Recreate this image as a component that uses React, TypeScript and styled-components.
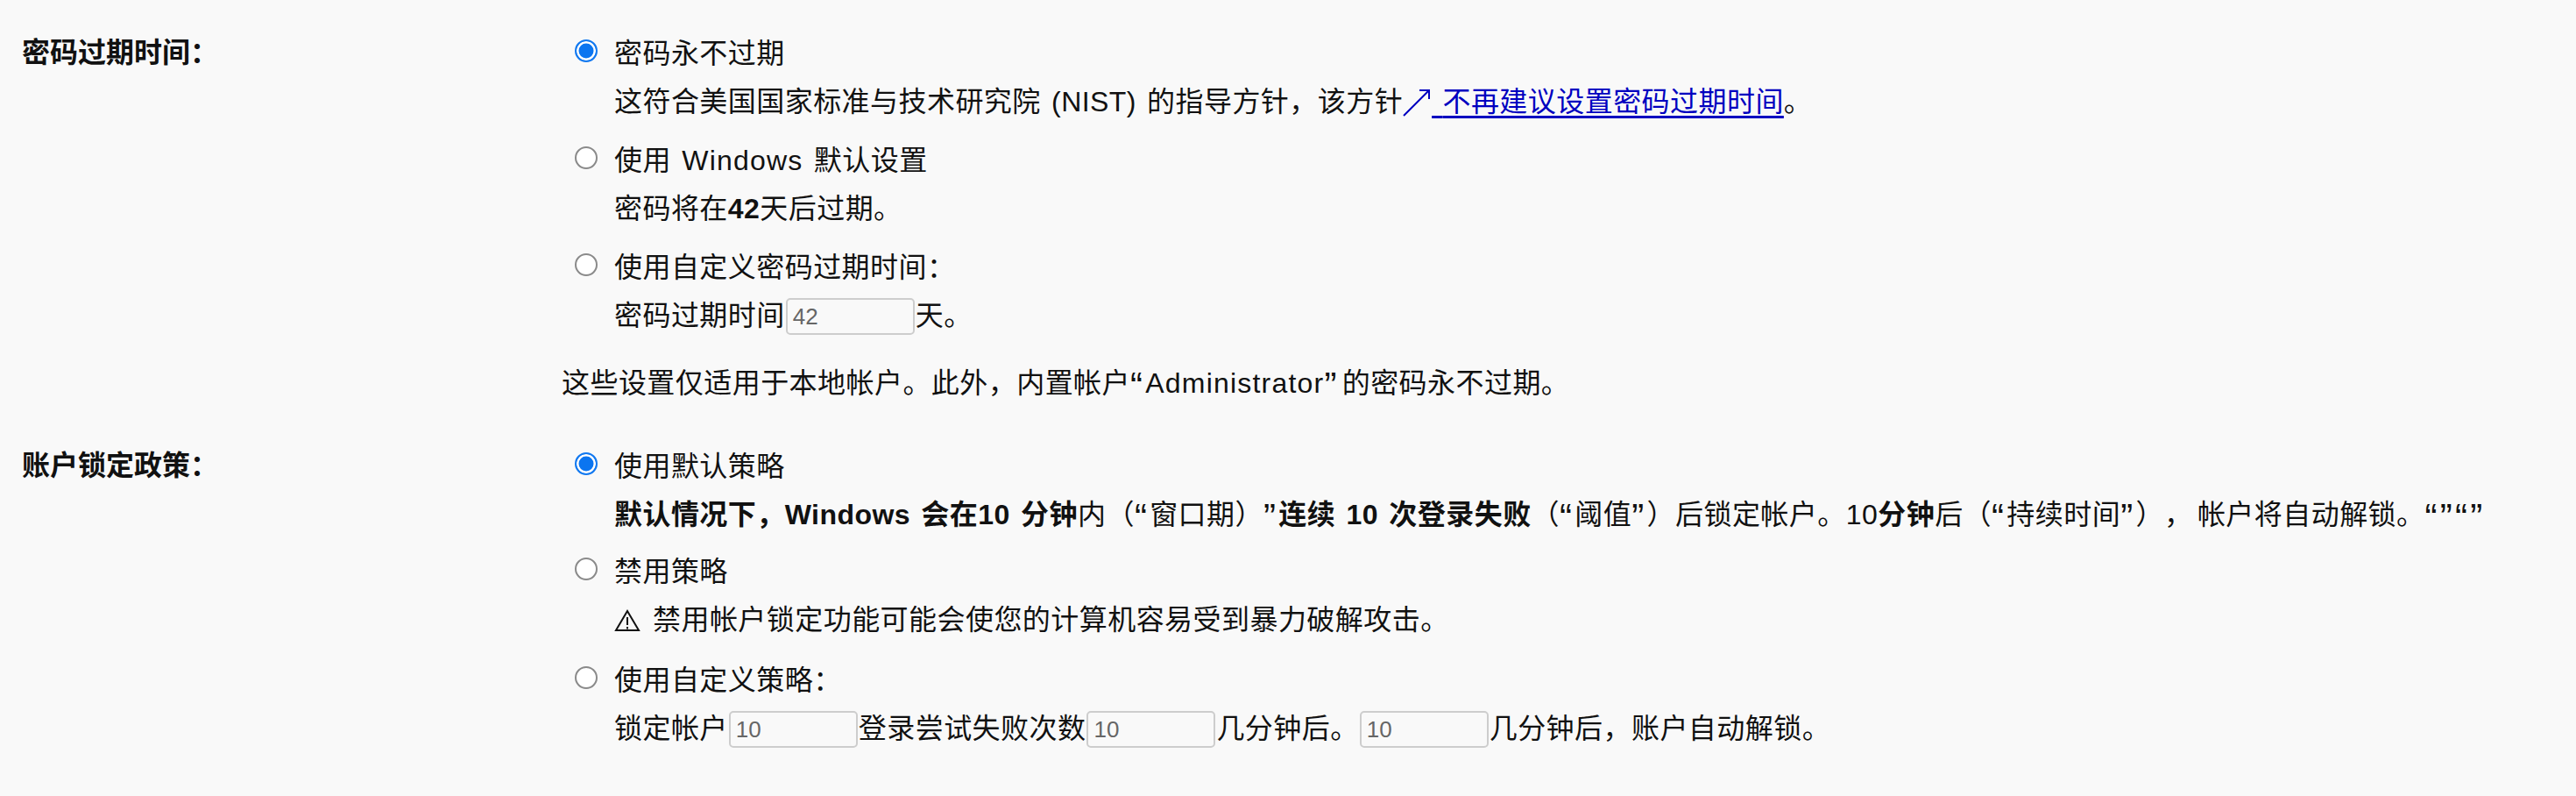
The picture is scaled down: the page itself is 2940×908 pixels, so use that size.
import React from "react";
import styled, { createGlobalStyle } from "styled-components";

const Global = createGlobalStyle`
  html, body { margin: 0; padding: 0; background: #f9f9f9; }
  body { font-family: "Liberation Sans", "Noto Sans CJK SC", sans-serif; font-size: 32px; color: #111; }
`;

const Page = styled.div`
  width: 2940px; height: 908px; overflow: hidden; box-sizing: border-box; padding: 29px 0 0 25px; background: #f9f9f9;
`;
const Section = styled.section`
  display: grid; grid-template-columns: 616px 1fr;
`;
const Label = styled.div`font-weight: 700; line-height: 57px; padding-top: 3px;`;
const Body = styled.div`
  display: flex; flex-direction: column; letter-spacing: 0.45px; word-spacing: 3px; white-space: pre;
  text-spacing-trim: space-all;
`;
const Choice = styled.div<{ $mb?: number }>`display: flex; flex-direction: column; margin-bottom: ${(p) => p.$mb ?? 8}px;`;
const RadioRow = styled.label`display: flex; align-items: center; height: 57px; padding-left: 15px;`;
const Radio = styled.span<{ $on?: boolean }>`
  width: 26px; height: 26px; box-sizing: border-box; border-radius: 50%; flex: none; margin-right: 19px;
  border: ${(p) => (p.$on ? "2.5px solid #1279f0" : "2.5px solid #8a8a8a")};
  background: ${(p) => (p.$on ? "#0b75f0" : "#fff")};
  box-shadow: ${(p) => (p.$on ? "inset 0 0 0 2.5px #fff" : "none")};
`;
const Desc = styled.div`height: 57px; line-height: 61px; padding-left: 60px;`;
const Note = styled.div`line-height: 62px; height: 60px; margin: 11px 0 34px;`;
const NumberBox = styled.span`
  display: inline-block; box-sizing: border-box; width: 147px; height: 42px; line-height: 38px; margin: -4px 1px 0; padding-left: 6px;
  vertical-align: middle; letter-spacing: 0;
  border: 2px solid #cdcdcd; border-radius: 5px; background: #f9f9f9; color: #666; font-size: 26px;
`;
const Link = styled.a`color: #0000c0; text-decoration: underline; text-decoration-thickness: 3px; text-underline-offset: 5px;`;
const Bold = styled.b`font-weight: 700;`;
const Latin = styled.span<{ $ls?: number }>`letter-spacing: ${(p) => p.$ls ?? 1.2}px;`;
const Quote = styled.span<{ $pad?: number }>`
  font-size: 42px; line-height: 0; vertical-align: -6px; letter-spacing: 3.3px; margin-right: ${(p) => p.$pad ?? 0}px;
`;
const Comma = styled.span`letter-spacing: 6px;`;
const Arrow = styled.svg`width: 33px; height: 32px; vertical-align: -6px;`;
const Warning = styled.svg`width: 30px; height: 26px; vertical-align: -3px; margin-right: 14px;`;

const App: React.FC = () => (
  <Page>
    <Global />
    <Section>
      <Label>密码过期时间：</Label>
      <Body>
        <Choice>
          <RadioRow><Radio $on /><span>密码永不过期</span></RadioRow>
          <Desc>这符合美国国家标准与技术研究院 <Latin $ls={0.4}>(NIST)</Latin> 的指导方针，该方针<Link href="#"><Arrow viewBox="0 0 33 32" fill="none" stroke="#0000c0" strokeWidth="2"><path d="M1 31 L30 2 M19 2 H30 V12" /></Arrow>{" "}不再建议设置密码过期时间</Link>。</Desc>
        </Choice>
        <Choice>
          <RadioRow><Radio /><span>使用 <Latin>Windows</Latin> 默认设置</span></RadioRow>
          <Desc>密码将在<Bold>42</Bold>天后过期。</Desc>
        </Choice>
        <Choice>
          <RadioRow><Radio /><span>使用自定义密码过期时间：</span></RadioRow>
          <Desc>密码过期时间<NumberBox>42</NumberBox>天。</Desc>
        </Choice>
        <Note>这些设置仅适用于本地帐户。此外，内置帐户<Quote>“</Quote><Latin>Administrator</Latin><Quote $pad={3}>”</Quote>的密码永不过期。</Note>
      </Body>
    </Section>
    <Section>
      <Label>账户锁定政策：</Label>
      <Body>
        <Choice $mb={6}>
          <RadioRow><Radio $on /><span>使用默认策略</span></RadioRow>
          <Desc><Bold>默认情况下，Windows 会在10 分钟</Bold>内（<Quote>“</Quote>窗口期）<Quote>”</Quote><Bold>连续 10 次登录失败</Bold>（<Quote>“</Quote>阈值<Quote>”</Quote>）后锁定帐户。10<Bold>分钟</Bold>后（<Quote>“</Quote>持续时间<Quote>”</Quote>）<Comma>，</Comma>帐户将自动解锁。<Quote>“”“”</Quote></Desc>
        </Choice>
        <Choice $mb={10}>
          <RadioRow><Radio /><span>禁用策略</span></RadioRow>
          <Desc><Warning viewBox="0 0 30 26" fill="none" stroke="#111" strokeWidth="2"><path d="M15 2 L28 24 H2 Z" /><path d="M15 9 V18 M15 20 V22.5" /></Warning>禁用帐户锁定功能可能会使您的计算机容易受到暴力破解攻击。</Desc>
        </Choice>
        <Choice>
          <RadioRow><Radio /><span>使用自定义策略：</span></RadioRow>
          <Desc>锁定帐户<NumberBox>10</NumberBox>登录尝试失败次数<NumberBox>10</NumberBox>几分钟后。<NumberBox>10</NumberBox>几分钟后，账户自动解锁。</Desc>
        </Choice>
      </Body>
    </Section>
  </Page>
);

export default App;
